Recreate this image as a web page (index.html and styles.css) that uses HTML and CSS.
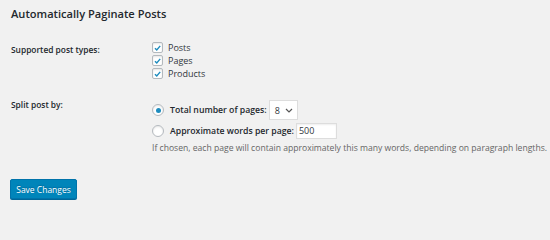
FILE: index.html
```html
<!DOCTYPE html>
<html>
<head>
<meta charset="utf-8">
<link rel="stylesheet" href="styles.css">
</head>
<body>
<div class="wrap">
  <h2 class="title">Automatically Paginate Posts</h2>
  <div class="row row-types">
    <div class="label">Supported post types:</div>
    <div class="field">
      <label class="check"><span class="cb"><svg viewBox="0 0 10 10" width="10" height="10"><path d="M2.2 5.2 L4.2 7.2 L8 2.6" fill="none" stroke="#1e8cbe" stroke-width="1.6"/></svg></span>Posts</label>
      <label class="check"><span class="cb"><svg viewBox="0 0 10 10" width="10" height="10"><path d="M2.2 5.2 L4.2 7.2 L8 2.6" fill="none" stroke="#1e8cbe" stroke-width="1.6"/></svg></span>Pages</label>
      <label class="check"><span class="cb"><svg viewBox="0 0 10 10" width="10" height="10"><path d="M2.2 5.2 L4.2 7.2 L8 2.6" fill="none" stroke="#1e8cbe" stroke-width="1.6"/></svg></span>Products</label>
    </div>
  </div>
  <div class="row row-split">
    <div class="label">Split post by:</div>
    <div class="field">
      <div class="opt opt1">
        <span class="radio on"></span>
        <span class="optlabel">Total number of pages:</span>
        <span class="select">8<svg class="chev" viewBox="0 0 8 5" width="8" height="5"><path d="M1 1 L4 4 L7 1" fill="none" stroke="#555" stroke-width="1.2"/></svg></span>
      </div>
      <div class="opt opt2">
        <span class="radio"></span>
        <span class="optlabel">Approximate words per page:</span>
        <span class="input">500</span>
      </div>
      <p class="desc">If chosen, each page will contain approximately this many words, depending on paragraph lengths.</p>
    </div>
  </div>
  <div class="submit"><button class="btn">Save Changes</button></div>
</div>
</body>
</html>
```
FILE: styles.css
```css
html, body {
  margin: 0;
  padding: 0;
  background: #f1f1f1;
  width: 550px;
  height: 224px;
  overflow: hidden;
}
body {
  font-family: "Open Sans", "Noto Sans", sans-serif;
  color: #23282d;
  font-size: 9px;
}
.wrap {
  padding: 6px 0 0 11px;
}
.title {
  margin: 0;
  font-size: 11.1px;
  font-weight: 600;
  line-height: 16px;
  color: #23282d;
}
.row {
  display: flex;
}
.label {
  width: 141px;
  font-weight: 600;
  font-size: 8.4px;
  line-height: 13px;
}
.row-types {
  margin-top: 19px;
}
.row-types .label {
  padding-top: 2px;
}
.field {
  display: flex;
  flex-direction: column;
}
.check {
  display: flex;
  align-items: center;
  height: 13px;
  font-size: 9px;
  color: #32373c;
}
.cb {
  width: 9px;
  height: 9px;
  border: 1px solid #b4b9be;
  background: #fff;
  border-radius: 2px;
  margin-right: 5px;
  display: flex;
  align-items: center;
  justify-content: center;
  box-shadow: inset 0 1px 2px rgba(0,0,0,0.1);
}
.row-split {
  margin-top: 18px;
}
.opt {
  display: flex;
  align-items: center;
}
.opt1 {
  margin-top: 1px;
  height: 22px;
}
.opt2 {
  height: 19px;
}
.radio {
  width: 10px;
  height: 10px;
  border: 1px solid #b4b9be;
  border-radius: 50%;
  background: #fff;
  margin-right: 6px;
  position: relative;
  box-shadow: inset 0 1px 2px rgba(0,0,0,0.1);
}
.radio.on::after {
  content: "";
  position: absolute;
  left: 2.5px;
  top: 2.5px;
  width: 5px;
  height: 5px;
  border-radius: 50%;
  background: #1e8cbe;
}
.optlabel {
  font-weight: 600;
  font-size: 8.7px;
  margin-right: 2px;
}
.select {
  display: flex;
  align-items: center;
  justify-content: space-between;
  box-sizing: border-box;
  width: 29px;
  height: 20px;
  border: 1px solid #ddd;
  background: #fff;
  padding: 0 4px 0 5px;
  font-size: 9px;
  color: #32373c;
}
.input {
  display: flex;
  align-items: center;
  box-sizing: border-box;
  width: 41px;
  height: 16px;
  border: 1px solid #ddd;
  background: #fff;
  padding: 0 2px;
  font-size: 9px;
  color: #32373c;
  box-shadow: inset 0 1px 2px rgba(0,0,0,0.07);
}
.desc {
  margin: 2px 0 0;
  font-size: 8.6px;
  color: #666;
  line-height: 12px;
  white-space: nowrap;
}
.submit {
  margin-top: 25px;
}
.btn {
  margin-left: -1px;
  background: #0085ba;
  border: 1px solid #0073aa;
  border-radius: 2px;
  color: #fff;
  font-family: "Open Sans", "Noto Sans", sans-serif;
  font-size: 8.5px;
  height: 20px;
  width: 67px;
  padding: 0;
  box-shadow: 0 1px 0 #006799;
  text-shadow: 0 -1px 1px #006799;
}
```
